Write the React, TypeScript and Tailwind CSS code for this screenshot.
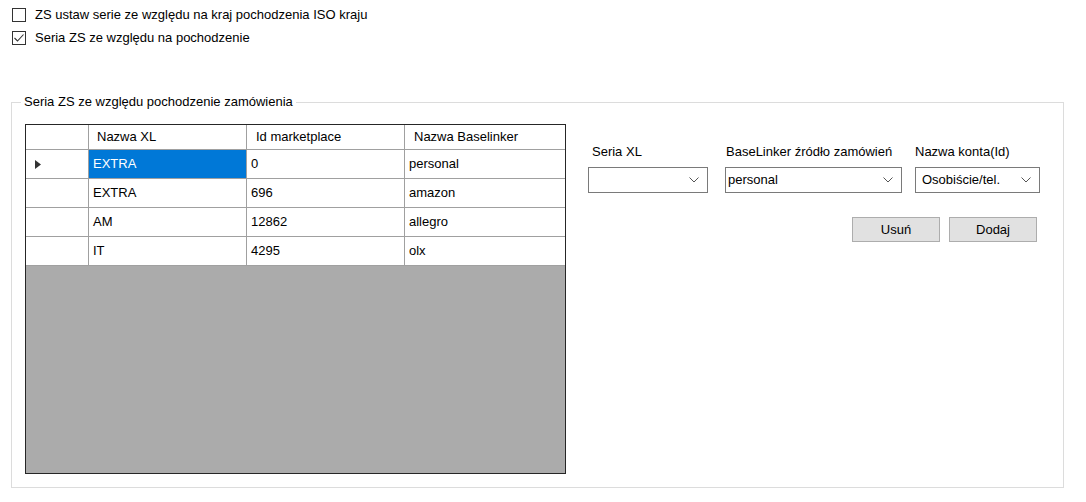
import { ReactNode } from 'react'

interface Row {
  xl: string
  id: string
  bl: string
}

const ROWS: Row[] = [
  { xl: 'EXTRA', id: '0', bl: 'personal' },
  { xl: 'EXTRA', id: '696', bl: 'amazon' },
  { xl: 'AM', id: '12862', bl: 'allegro' },
  { xl: 'IT', id: '4295', bl: 'olx' },
]

function Checkbox({ checked, children }: { checked?: boolean; children: ReactNode }) {
  return (
    <label className="flex items-center gap-[9px] h-[14px]">
      <span className="w-[14px] h-[14px] border border-[#333] bg-white flex items-center justify-center shrink-0">
        {checked && (
          <svg width="12" height="12" viewBox="0 0 12 12">
            <polyline points="1.5,6 4.5,9 10.5,2.5" fill="none" stroke="#333" strokeWidth="1.1" />
          </svg>
        )}
      </span>
      <span className="leading-[16px]">{children}</span>
    </label>
  )
}

function Chevron() {
  return (
    <svg width="10" height="6" viewBox="0 0 10 6" className="shrink-0">
      <polyline points="0.5,0.5 5,5 9.5,0.5" fill="none" stroke="#555" strokeWidth="1" />
    </svg>
  )
}

function Combo({ value, width, pad }: { value?: string; width: string; pad: string }) {
  return (
    <div className={`${width} h-[26px] border border-[#7a7a7a] bg-white flex items-center pr-[8px] ${pad}`}>
      <span className="flex-1 leading-[16px] truncate">{value}</span>
      <Chevron />
    </div>
  )
}

function DataGrid() {
  return (
    <div className="w-[541px] h-[350px] border border-[#262626] bg-[#ababab] flex flex-col shrink-0">
      <div className="flex h-[25px] bg-white border-b border-[#a0a0a0]">
        <div className="w-[63px] border-r border-[#a0a0a0]" />
        <div className="w-[158px] border-r border-[#a0a0a0] pl-[8px] flex items-center">Nazwa XL</div>
        <div className="w-[158px] border-r border-[#a0a0a0] pl-[9px] flex items-center">Id marketplace</div>
        <div className="flex-1 pl-[9px] flex items-center">Nazwa Baselinker</div>
      </div>
      {ROWS.map((r, i) => (
        <div key={i} className="flex h-[29px] bg-white border-b border-[#a0a0a0]">
          <div className="w-[63px] border-r border-[#a0a0a0] pl-[9px] flex items-center">
            {i === 0 && (
              <svg width="6" height="9" viewBox="0 0 6 9">
                <polygon points="0,0 6,4.5 0,9" fill="#333" />
              </svg>
            )}
          </div>
          <div
            className={`w-[158px] border-r border-[#a0a0a0] pl-[4px] flex items-center ${
              i === 0 ? 'bg-[#0078d7] text-white' : ''
            }`}
          >
            {r.xl}
          </div>
          <div className="w-[158px] border-r border-[#a0a0a0] pl-[4px] flex items-center">{r.id}</div>
          <div className="flex-1 pl-[4px] flex items-center">{r.bl}</div>
        </div>
      ))}
    </div>
  )
}

export default function App() {
  return (
    <div className="w-[1086px] h-[502px] bg-white text-black text-[13px] font-['Liberation_Sans',Arial,sans-serif] overflow-hidden">
      <div className="pl-[12px] pt-[8px] flex flex-col gap-[9px]">
        <Checkbox>ZS ustaw serie ze względu na kraj pochodzenia ISO kraju</Checkbox>
        <Checkbox checked>Seria ZS ze względu na pochodzenie</Checkbox>
      </div>

      <fieldset className="ml-[11px] mt-[49px] w-[1053px] border border-[#dcdcdc] pl-[13px] pr-[13px] pt-[14px] pb-[13px]">
        <legend className="-ml-[4px] px-[3px] leading-[16px]">Seria ZS ze względu pochodzenie zamówienia</legend>
        <div className="flex gap-[22px]">
          <DataGrid />

          <div className="w-[452px] pt-[20px] flex flex-col">
            <div className="flex">
              <div className="flex flex-col gap-[7px]">
                <span className="pl-[4px] leading-[16px]">Seria XL</span>
                <Combo width="w-[120px]" pad="pl-[4px]" />
              </div>
              <div className="ml-[17px] flex flex-col gap-[7px]">
                <span className="pl-[1px] leading-[16px]">BaseLinker źródło zamówień</span>
                <Combo value="personal" width="w-[177px]" pad="pl-[2px]" />
              </div>
              <div className="ml-[13px] flex flex-col gap-[7px]">
                <span className="leading-[16px]">Nazwa konta(Id)</span>
                <Combo value="Osobiście/tel." width="w-[125px]" pad="pl-[6px]" />
              </div>
            </div>

            <div className="mt-[24px] flex justify-end gap-[9px] pr-[3px]">
              <button className="w-[88px] h-[25px] bg-[#e1e1e1] border border-[#adadad] leading-[16px]">Usuń</button>
              <button className="w-[88px] h-[25px] bg-[#e1e1e1] border border-[#adadad] leading-[16px]">Dodaj</button>
            </div>
          </div>
        </div>
      </fieldset>
    </div>
  )
}
